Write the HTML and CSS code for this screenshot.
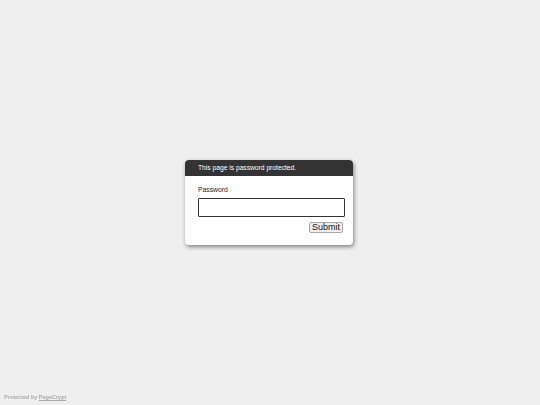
FILE: index.html
```html
<!DOCTYPE html>
<html lang="en">
<head>
<meta charset="UTF-8">
<meta name="viewport" content="width=device-width, initial-scale=1.0">
<title>Protected Page</title>
<link rel="stylesheet" href="styles.css">
</head>
<body>

<div class="dialog">
  <div class="dialog-header">This page is password protected.</div>
  <form class="dialog-body" onsubmit="return false;">
    <label class="pw-label" for="pwd">Password</label>
    <input type="password" id="pwd" class="pw-input" autofocus>
    <button type="submit" class="submit-btn">Submit</button>
  </form>
</div>

<div class="footer">Protected by <a href="#">PageCrypt</a></div>

</body>
</html>
```

FILE: styles.css
```css
html, body {
  height: 100%;
}
body {
  margin: 0;
  font-family: "Liberation Sans", Arial, sans-serif;
  background-color: #efefef;
  display: flex;
  align-items: center;
  justify-content: center;
}
.dialog {
  width: 168px;
  height: 85px;
  background-color: #fff;
  border-radius: 4px;
  box-shadow: 1px 2px 4px rgba(0, 0, 0, 0.45);
  overflow: hidden;
  margin-left: -2px;
}
.dialog-header {
  height: 16px;
  line-height: 16px;
  padding: 0 13px;
  background-color: #333;
  color: #fff;
  font-size: 6.7px;
}
.dialog-body {
  display: flex;
  flex-direction: column;
  width: 147px;
  padding: 10px 0 0 13px;
}
.pw-label {
  font-size: 6.8px;
  line-height: 8px;
  color: #222;
  margin-bottom: 4px;
}
.pw-input {
  box-sizing: border-box;
  width: 147px;
  height: 19px;
  margin: 0;
  padding: 0 2px;
  border: 1px solid #333;
  border-radius: 1px;
  font-size: 9px;
  outline: none;
}
.submit-btn {
  align-self: flex-end;
  margin: 5px 2px 0 0;
  height: 11px;
  padding: 0 2px;
  font-family: "Liberation Sans", Arial, sans-serif;
  font-size: 9px;
  line-height: 9px;
  color: #111;
  background-color: #efefef;
  border: 1px solid #aaa;
  border-radius: 2px;
}
/* sticks to the bottom left corner */
.footer {
  position: fixed;
  left: 4px;
  bottom: 5px;
  font-size: 5.5px;
  font-weight: bold;
  color: #aaa;
}
.footer a {
  color: #aaa;
}
```
